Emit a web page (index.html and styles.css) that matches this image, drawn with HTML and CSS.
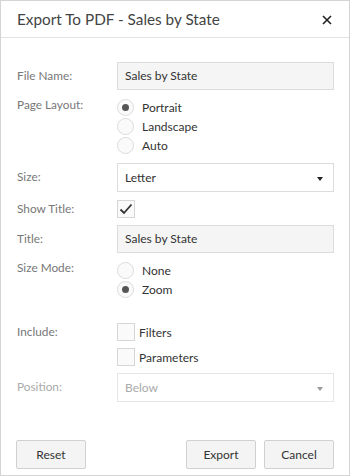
FILE: index.html
```html
<!DOCTYPE html>
<html lang="en">
<head>
  <meta charset="UTF-8" />
  <title>Export To PDF</title>
  <link rel="stylesheet" href="styles.css">
</head>
<body>
  <div class="dialog">
    <div class="dialog-header">
      <span class="dialog-title">Export To PDF - Sales by State</span>
      <span class="dialog-close">
        <svg width="10" height="10" viewBox="0 0 10 10"><path d="M1 1 L9 9 M9 1 L1 9" stroke="#222" stroke-width="1.6"/></svg>
      </span>
    </div>

    <div class="dialog-body">
      <div class="row row-file">
        <label class="row-label">File Name:</label>
        <div class="text-box">Sales by State</div>
      </div>

      <div class="row row-layout">
        <label class="row-label">Page Layout:</label>
        <div class="options">
          <div class="option"><span class="radio checked"></span>Portrait</div>
          <div class="option"><span class="radio"></span>Landscape</div>
          <div class="option"><span class="radio"></span>Auto</div>
        </div>
      </div>

      <div class="row row-size">
        <label class="row-label">Size:</label>
        <div class="select-box">Letter<span class="caret"></span></div>
      </div>

      <div class="row row-show">
        <label class="row-label">Show Title:</label>
        <span class="check checked">
          <svg width="14" height="12" viewBox="0 0 14 12"><path d="M1.5 6.5 L5 10 L12.5 1.5" fill="none" stroke="#333" stroke-width="1.8"/></svg>
        </span>
      </div>

      <div class="row row-title">
        <label class="row-label">Title:</label>
        <div class="text-box">Sales by State</div>
      </div>

      <div class="row row-mode">
        <label class="row-label">Size Mode:</label>
        <div class="options">
          <div class="option"><span class="radio"></span>None</div>
          <div class="option"><span class="radio checked"></span>Zoom</div>
        </div>
      </div>

      <div class="row row-include">
        <label class="row-label">Include:</label>
        <div class="checks">
          <div class="check-option"><span class="check"></span>Filters</div>
          <div class="check-option"><span class="check"></span>Parameters</div>
        </div>
      </div>

      <div class="row row-position disabled">
        <label class="row-label">Position:</label>
        <div class="select-box">Below<span class="caret"></span></div>
      </div>
    </div>

    <div class="dialog-footer">
      <button class="btn">Reset</button>
      <div class="footer-right">
        <button class="btn">Export</button>
        <button class="btn">Cancel</button>
      </div>
    </div>
  </div>
</body>
</html>
```

FILE: styles.css
```css
body {
  margin: 0;
  font-family: Lato, 'Open Sans', sans-serif;
  background: #fff;
}

.dialog {
  width: 350px;
  height: 476px;
  box-sizing: border-box;
  border: 1px solid #d4d4d4;
  background: #fff;
  color: #333;
}

.dialog-header {
  height: 36px;
  border-bottom: 1px solid #e3e3e3;
  display: flex;
  align-items: center;
  justify-content: space-between;
  padding: 0 17px 0 16px;
}

.dialog-title {
  font-size: 15.3px;
  color: #444;
}

.dialog-close {
  display: flex;
  padding-top: 2px;
}

.dialog-body {
  padding: 24px 15px 0 16px;
}

.row {
  display: grid;
  grid-template-columns: 100px 1fr;
  margin-bottom: 8px;
}

.row-label {
  font-size: 11.8px;
  color: #777;
  line-height: 28px;
}

.row-layout .row-label,
.row-mode .row-label {
  line-height: 14px;
}

.row-show .row-label {
  line-height: 18px;
}

.row-show { margin-bottom: 7px; }
.row-mode { margin-bottom: 24px; }
.row-include { margin-bottom: 7px; }
.row-include .row-label { line-height: 18px; }

.text-box,
.select-box {
  height: 28px;
  box-sizing: border-box;
  border: 1px solid #dcdcdc;
  background: #f5f5f5;
  font-size: 12px;
  line-height: 26px;
  padding: 0 7px;
  color: #333;
}

.select-box {
  height: 29px;
  line-height: 27px;
  background: #fff;
  position: relative;
}

.caret {
  position: absolute;
  right: 10px;
  top: 13px;
  border-left: 3.5px solid transparent;
  border-right: 3.5px solid transparent;
  border-top: 4px solid #222;
}

.options {
  display: flex;
  flex-direction: column;
}

.option {
  display: flex;
  align-items: center;
  height: 19px;
  font-size: 12px;
  color: #333;
}

.radio {
  width: 17px;
  height: 17px;
  box-sizing: border-box;
  border: 1px solid #dcdcdc;
  border-radius: 50%;
  background: #fafafa;
  margin-right: 8px;
  display: flex;
  align-items: center;
  justify-content: center;
}

.radio.checked::after {
  content: "";
  width: 7px;
  height: 7px;
  border-radius: 50%;
  background: #555;
}

.check {
  width: 18px;
  height: 18px;
  box-sizing: border-box;
  border: 1px solid #d6d6d6;
  background: #fafafa;
  display: flex;
  align-items: center;
  justify-content: center;
}

.checks {
  display: flex;
  flex-direction: column;
  gap: 7px;
}

.check-option {
  display: flex;
  align-items: center;
  font-size: 12px;
  color: #333;
}

.check-option .check {
  margin-right: 4px;
}

.disabled .row-label,
.disabled .select-box {
  color: #aaa;
}

.disabled .select-box {
  border-color: #e6e6e6;
}

.disabled .caret {
  border-top-color: #999;
}

.dialog-footer {
  display: flex;
  justify-content: space-between;
  padding: 30px 15px 0 15px;
}

.footer-right {
  display: flex;
  gap: 8px;
}

.btn {
  width: 70px;
  height: 29px;
  border: 1px solid #d0d0d0;
  border-radius: 2px;
  background: #f4f4f4;
  font-family: Lato, 'Open Sans', sans-serif;
  font-size: 12px;
  color: #333;
  padding: 0;
}
```
